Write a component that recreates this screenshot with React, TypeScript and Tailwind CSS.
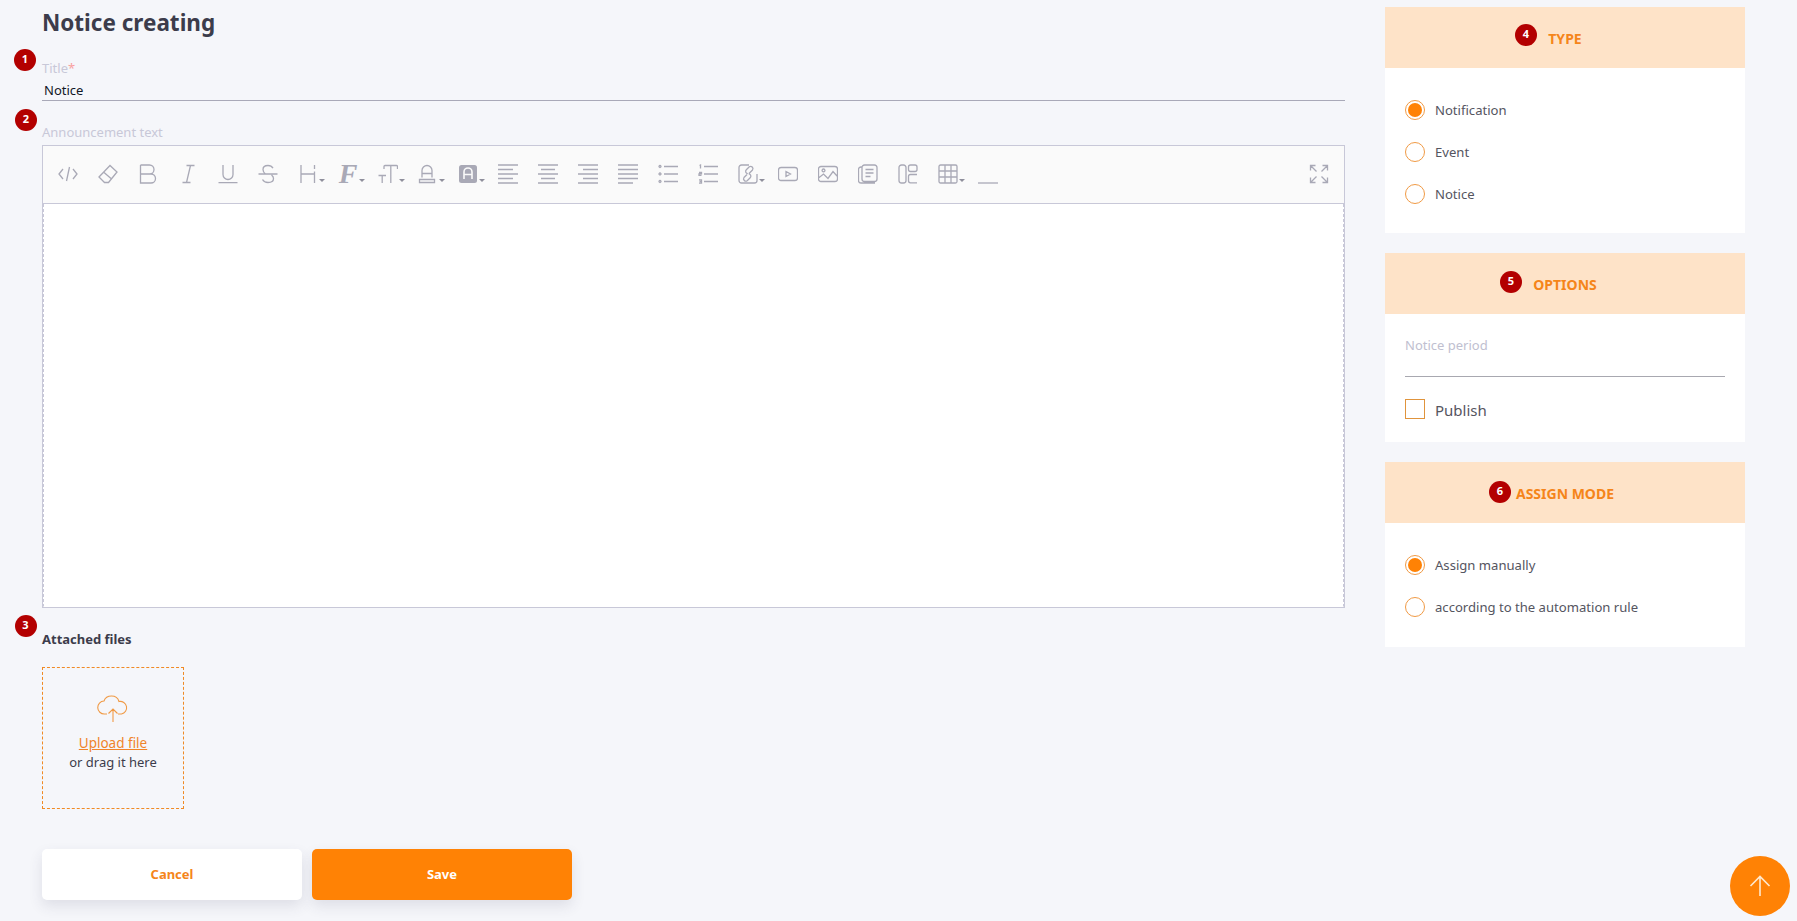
const font = "font-['Noto_Sans',sans-serif]";

function Badge({ n, className }: { n: number; className: string }) {
  return (
    <span
      className={`absolute flex h-[22px] w-[22px] items-center justify-center rounded-full bg-[#b30000] pb-[2px] text-[11px] font-bold text-white ${className}`}
    >
      {n}
    </span>
  );
}

function Icon({ d, drop }: { d: string; drop?: boolean }) {
  return (
    <div className="relative flex h-[58px] w-10 items-center justify-center pb-[2px]">
      <svg viewBox="0 0 20 20" className="h-5 w-5" fill="none" stroke="#a9a9b6" strokeWidth="1.3">
        <path d={d} />
      </svg>
      {drop && <Caret />}
    </div>
  );
}

function Caret() {
  return (
    <span className="absolute left-[31px] top-[33px] h-0 w-0 border-x-[3px] border-t-[3px] border-x-transparent border-t-[#8f8f9c]" />
  );
}

const tools: { d: string; drop?: boolean }[] = [
  { d: "M5 5 1 10l4 5M15 5l4 5-4 5M11.5 3 8.5 17" },
  { d: "M1 13 12 1.500 19 8 10.500 18.500H6.500ZM5.500 8l7.500 6.500" },
  { d: "M2.500 1h9a4.500 4.500 0 0 1 0 9h-9M2.500 1v18h10.500a4.500 4.500 0 0 0 0-9" },
  { d: "M8.500 1.500h8M12.500 1.500 8.500 18.500M4.500 18.500h8" },
  { d: "M5 1v9.500a5 5 0 0 0 10 0V1M.5 18.700h19" },
  { d: "M.5 10h19M15 4.200C14 2.500 12 1.500 10 1.500c-3 0-5 1.500-5 4 0 1.700 1 3.500 2.500 4.500M13.500 11c1.300 1 2 2 2 3.500 0 2.500-2.500 4-5.500 4s-4.500-1.200-5.500-3" },
  { d: "M3 1v18M16.500 1v4M16.500 7.500V19M3 10h13.500", drop: true },
];

const tools2: { d: string; drop?: boolean }[] = [
  { d: "M6 5V2.500A1 1 0 0 1 7 1.500h11.500a1 1 0 0 1 1 1V5M12.800 1.500V19M.5 11.500h7.500M4.200 11.500V19", drop: true },
  { d: "M4 13.500V6.500a5 5 0 0 1 10 0v7M4 9.500h10M1.500 15.500h15v3h-15Z", drop: true },
];

const align = (rows: [number, number][]) =>
  rows.map(([a, b], i) => `M${a} ${[1, 5.5, 10, 14.5, 19][i]}H${b}`).join("");

const tools3: { d: string; drop?: boolean }[] = [
  { d: align([[0, 20], [0, 15], [0, 20], [0, 15], [0, 20]]) },
  { d: align([[0, 20], [3, 17], [0, 20], [3, 17], [0, 20]]) },
  { d: align([[0, 20], [5, 20], [0, 20], [5, 20], [0, 20]]) },
  { d: align([[0, 20], [0, 20], [0, 20], [0, 20], [0, 15]]) },
  { d: "M6 2.500h14M6 10h14M6 17.500h14M2 1.500a1 1 0 1 0 .01 0ZM2 9a1 1 0 1 0 .01 0ZM2 16.500a1 1 0 1 0 .01 0Z" },
  { d: "M6 2.500h14M6 10h14M6 17.500h14M1.500 1.500l1-.5v3.500M1 8.500h2.500v1.300H1v1.500h2.500M1 15.800h2.500v3.400H1M1.500 17.500h2" },
  { d: "M11 1H3.500A2.500 2.500 0 0 0 1 3.500v13A2.500 2.500 0 0 0 3.500 19h13a2.500 2.500 0 0 0 2.500-2.500V10M9 10.500l-3 3a2.300 2.300 0 0 0 3.200 3.200l3-3a2.300 2.300 0 0 0-1.500-3.900M11 9.500l3.500-3.500a2.300 2.300 0 0 0-3.200-3.200l-3 3a2.300 2.300 0 0 0 1.500 3.900", drop: true },
  { d: "M3 3.500h14A2.500 2.500 0 0 1 19.500 6v8a2.500 2.500 0 0 1-2.500 2.500H3A2.500 2.500 0 0 1 .5 14V6A2.500 2.500 0 0 1 3 3.500ZM8 7.500l4.500 2.500L8 12.500Z" },
  { d: "M3 2.500h14A2.500 2.500 0 0 1 19.500 5v10a2.500 2.500 0 0 1-2.500 2.500H3A2.500 2.500 0 0 1 .5 15V5A2.500 2.500 0 0 1 3 2.500ZM.5 14l5-4 4.500 4.500 5-7 4.500 5M5.500 5a1.400 1.400 0 1 0 .01 0Z" },
  { d: "M3.500 3H3A2.500 2.500 0 0 0 .5 5.500v11A2.500 2.500 0 0 0 3 19h14M4 3.500A2.500 2.500 0 0 1 6.500 1h10A2.500 2.500 0 0 1 19 3.500V15a2.500 2.500 0 0 1-2.500 2.500h-10A2.500 2.500 0 0 1 4 15ZM7.500 5.500h8M7.500 9h8M7.500 12.500h5" },
  { d: "M3.500 1h2A2.500 2.500 0 0 1 8 3.500v13A2.500 2.500 0 0 1 5.500 19h-2A2.500 2.500 0 0 1 1 16.500v-13A2.500 2.500 0 0 1 3.500 1ZM12.500 1H17a2 2 0 0 1 2 2v2.500a2 2 0 0 1-2 2h-4.500a2 2 0 0 1-2-2V3a2 2 0 0 1 2-2ZM19 10.500h-6.500a2 2 0 0 0-2 2v4.300a2 2 0 0 0 2 2H19" },
  { d: "M2.500 1h15A1.500 1.500 0 0 1 19 2.500v15a1.500 1.500 0 0 1-1.500 1.500h-15A1.500 1.500 0 0 1 1 17.500v-15A1.500 1.500 0 0 1 2.500 1ZM1 7h18M1 13h18M7 1v18M13 1v18", drop: true },
  { d: "M0 19h20" },
];

function Radio({ label, checked }: { label: string; checked?: boolean }) {
  return (
    <div className="flex h-[42px] items-center gap-[10px] text-[13.1px] text-[#55555f]">
      <span className="flex h-5 w-5 items-center justify-center rounded-full border border-[#f09a45] bg-white">
        {checked && <span className="h-[14px] w-[14px] rounded-full bg-[#ff8205]" />}
      </span>
      <span className="pt-[1px]">{label}</span>
    </div>
  );
}

function Card({
  title,
  badge,
  children,
  className,
}: {
  title: string;
  badge: React.ReactNode;
  children: React.ReactNode;
  className: string;
}) {
  return (
    <section className={`bg-white ${className}`}>
      <header className="relative flex h-[61px] items-center justify-center bg-[#fee3c8] pt-[1px] text-[14px] font-bold text-[#f5851a]">
        {badge}
        {title}
      </header>
      {children}
    </section>
  );
}

export default function App() {
  return (
    <div className={`relative flex h-[921px] overflow-hidden bg-[#f5f6fa] pl-[42px] ${font}`}>
      <main className="w-[1303px]">
        <h1 className="h-[48px] pt-[5px] text-[22.5px] font-bold leading-[36px] text-[#3c3c4b]">
          Notice creating
        </h1>

        <div className="relative h-[53px] border-b border-[#a9a9b8] pt-[9px]">
          <Badge n={1} className="left-[-28px] top-[1px]" />
          <div className="h-[22px] text-[13px] leading-[22px] text-[#c8c8d8]">
            Title<span className="text-[#f9a0a0]">*</span>
          </div>
          <div className="pl-[2px] text-[13px] leading-[22px] text-[#111827]">Notice</div>
        </div>

        <div className="relative h-[44px] pt-[20px]">
          <Badge n={2} className="left-[-27px] top-[8px]" />
          <div className="text-[13px] leading-[22px] text-[#c8c8d8]">Announcement text</div>
        </div>

        <div className="h-[463px] border border-[#c8c8d8]">
          <div className="flex h-[58px] items-center justify-between border-b border-[#c8c8d8] bg-[#fafafa] pl-[5px] pr-[5px]">
            <div className="flex">
              {tools.map((t, i) => (
                <Icon key={i} {...t} />
              ))}
              <div className="relative flex h-[58px] w-10 items-center justify-center pb-[2px]">
                <span className="font-['Liberation_Serif',serif] text-[28px] font-bold italic leading-none text-[#a9a9b6]">
                  F
                </span>
                <Caret />
              </div>
              {tools2.map((t, i) => (
                <Icon key={i} {...t} />
              ))}
              <div className="relative flex h-[58px] w-10 items-center justify-center pb-[2px]">
                <svg viewBox="0 0 20 20" className="h-5 w-5">
                  <rect x="1" y="1" width="18" height="18" rx="2.5" fill="#a9a9b6" />
                  <path d="M6 15V8a4 4 0 0 1 8 0v7M6 10.500h8" fill="none" stroke="#fafafa" strokeWidth="1.600" />
                </svg>
                <Caret />
              </div>
              {tools3.map((t, i) => (
                <Icon key={i} {...t} />
              ))}
            </div>
            <Icon d="M2 2l5.500 5.500M1.500 6.500V1.500h5M18 2l-5.500 5.500M13.500 1.500h5v5M2 18l5.500-5.500M1.500 13.500v5h5M18 18l-5.500-5.500M18.500 13.500v5h-5" />
          </div>
          <div className="h-[403px] border-x border-b border-dashed border-x-[#c8c8d8] border-b-transparent bg-white" />
        </div>

        <div className="relative pt-[20px]">
          <Badge n={3} className="left-[-27.5px] top-[7px]" />
          <div className="text-[13px] font-bold leading-[22px] text-[#3c3c4b]">Attached files</div>
        </div>

        <div className="mt-[17px] flex h-[142px] w-[142px] flex-col items-center border border-dashed border-[#f08a24] pt-[27px] text-[13px]">
          <svg viewBox="0 0 32 28" className="h-[28px] w-[32px]" fill="none" stroke="#f09a45" strokeWidth="1.100">
            <path d="M10 19H7.500a6.500 6.500 0 0 1-.5-13C8 3 11 1 14.500 1c3.500 0 6.500 2 7.500 5.500a6.300 6.300 0 0 1 2.500 12.500H21M16 27V14M11.500 18.500 16 14l4.500 4.500" />
          </svg>
          <a className="mt-[11px] text-[13.5px] leading-[19px] text-[#f0842a] underline">Upload file</a>
          <span className="leading-[19px] text-[#3c3c4b]">or drag it here</span>
        </div>

        <div className="mt-[40px] flex gap-[10px]">
          <button className="h-[51px] w-[260px] rounded-[5px] bg-white pt-[1px] text-[13px] font-bold text-[#f5851a] shadow-[0_6px_14px_rgba(60,60,90,0.12)]">
            Cancel
          </button>
          <button className="h-[51px] w-[260px] rounded-[5px] bg-[#ff8205] pt-[1px] text-[13px] font-bold text-white shadow-[0_6px_14px_rgba(60,60,90,0.12)]">
            Save
          </button>
        </div>
      </main>

      <aside className="ml-[40px] flex w-[360px] flex-col gap-[20px] pt-[7px]">
        <Card
          title="TYPE"
          className="h-[226px]"
          badge={<Badge n={4} className="left-[130px] top-[17px]" />}
        >
          <div className="px-5 pt-[21px]">
            <Radio label="Notification" checked />
            <Radio label="Event" />
            <Radio label="Notice" />
          </div>
        </Card>

        <Card
          title="OPTIONS"
          className="h-[189px]"
          badge={<Badge n={5} className="left-[115px] top-[18px]" />}
        >
          <div className="px-5">
            <div className="h-[63px] border-b border-[#a8a8b0] pt-[20px] text-[13px] leading-[22px] text-[#c0c0d0]">
              Notice period
            </div>
            <label className="mt-[21px] flex items-center gap-[10px] text-[15px] leading-5 text-[#55555f]">
              <span className="h-5 w-5 border border-[#e0943c]" />
              <span className="pt-[2px]">Publish</span>
            </label>
          </div>
        </Card>

        <Card
          title="ASSIGN MODE"
          className="h-[185px]"
          badge={<Badge n={6} className="left-[104px] top-[19px]" />}
        >
          <div className="px-5 pt-[21px]">
            <Radio label="Assign manually" checked />
            <Radio label="according to the automation rule" />
          </div>
        </Card>
      </aside>

      <button className="absolute left-[1730px] top-[856px] flex h-[60px] w-[60px] items-center justify-center rounded-full bg-[#ff8205]">
        <svg viewBox="0 0 24 24" className="h-[24px] w-[24px]" fill="none" stroke="#ffe9cf" strokeWidth="1.600">
          <path d="M12 22V2.500M2.500 12 12 2.500l9.500 9.500" />
        </svg>
      </button>
    </div>
  );
}
